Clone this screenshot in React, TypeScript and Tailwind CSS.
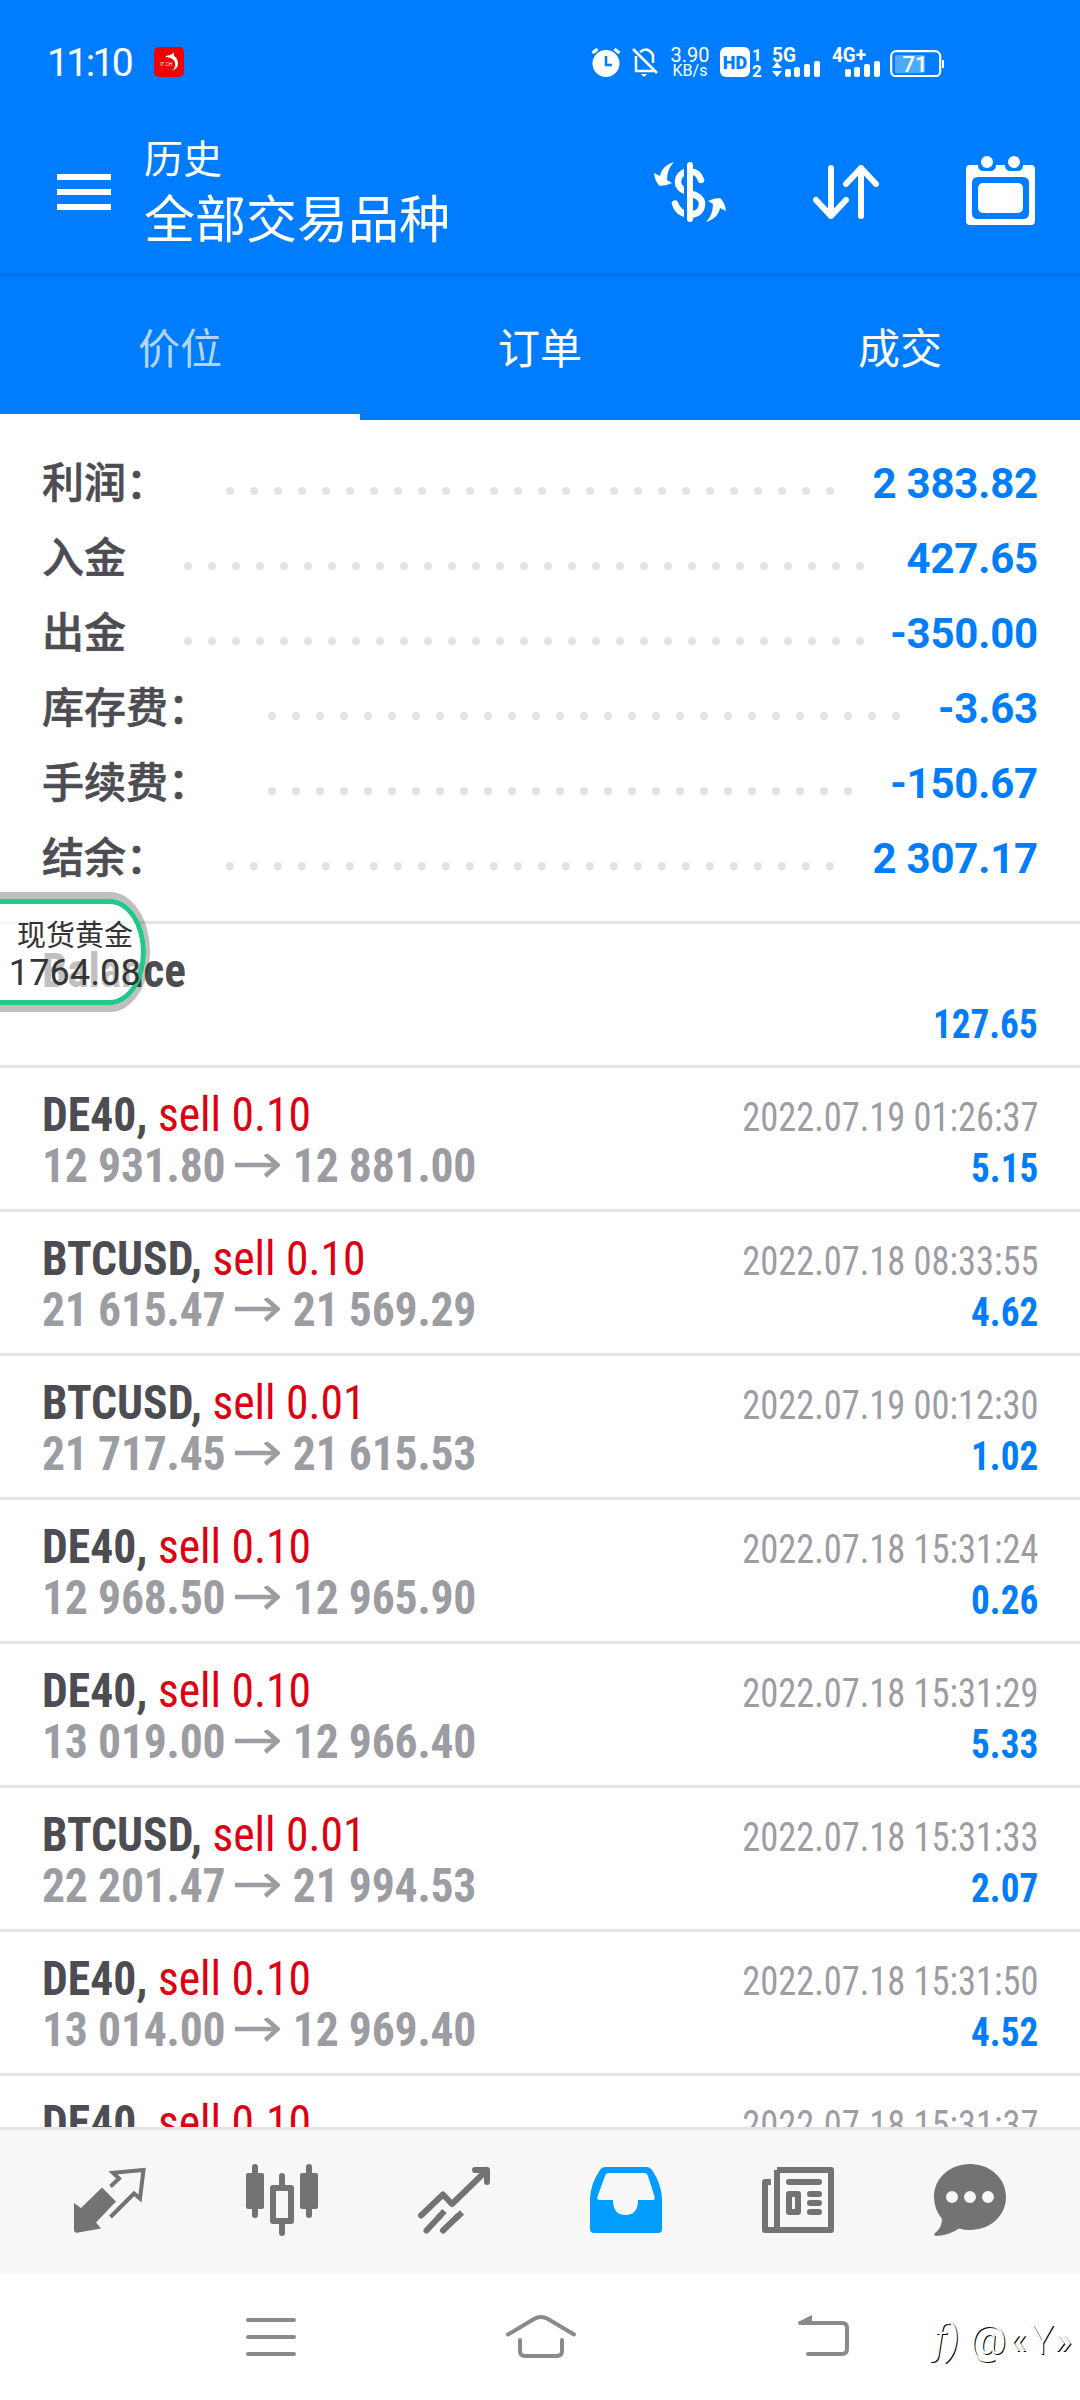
import { clsx } from "clsx";

type SummaryRow = { label: string; value: string; dots: number };

type Deal = {
  symbol: string;
  volume: string;
  open: string;
  close: string;
  time: string;
  profit: string;
};

const summary: SummaryRow[] = [
  { label: "利润：", value: "2 383.82", dots: 26 },
  { label: "入金", value: "427.65", dots: 29 },
  { label: "出金", value: "-350.00", dots: 29 },
  { label: "库存费：", value: "-3.63", dots: 27 },
  { label: "手续费：", value: "-150.67", dots: 25 },
  { label: "结余：", value: "2 307.17", dots: 26 },
];

const deals: Deal[] = [
  { symbol: "DE40", volume: "0.10", open: "12 931.80", close: "12 881.00", time: "2022.07.19 01:26:37", profit: "5.15" },
  { symbol: "BTCUSD", volume: "0.10", open: "21 615.47", close: "21 569.29", time: "2022.07.18 08:33:55", profit: "4.62" },
  { symbol: "BTCUSD", volume: "0.01", open: "21 717.45", close: "21 615.53", time: "2022.07.19 00:12:30", profit: "1.02" },
  { symbol: "DE40", volume: "0.10", open: "12 968.50", close: "12 965.90", time: "2022.07.18 15:31:24", profit: "0.26" },
  { symbol: "DE40", volume: "0.10", open: "13 019.00", close: "12 966.40", time: "2022.07.18 15:31:29", profit: "5.33" },
  { symbol: "BTCUSD", volume: "0.01", open: "22 201.47", close: "21 994.53", time: "2022.07.18 15:31:33", profit: "2.07" },
  { symbol: "DE40", volume: "0.10", open: "13 014.00", close: "12 969.40", time: "2022.07.18 15:31:50", profit: "4.52" },
];

const tabs = ["价位", "订单", "成交"];

function StatusBar() {
  return (
    <div className="flex h-[120px] items-start pt-[47px] pl-[47px] text-white">
      <span className="w-[107px] text-[39px] leading-[32px] tracking-[-2.6px]">11:10</span>
      <svg className="h-[30px] w-[30px]" viewBox="0 0 30 30">
        <rect width="30" height="30" rx="5" fill="#f00000" />
        <path d="M11 10q2-2 5-2 3-1 4-3v4q4 2 4 8 0 5-7 7 5-3 4-8-1-4-5-5-2-1-5-1z" fill="#fff" />
        <text x="6" y="19" fill="#fff" fontSize="5">IT CH</text>
      </svg>

      <div className="ml-[407px] flex items-start">
        <svg className="h-[30px] w-[30px]" viewBox="0 0 30 30" fill="none">
          <circle cx="15" cy="16.5" r="13.5" fill="#fff" />
          <path d="M1.5 6l5-4M28.5 6l-5-4" stroke="#fff" strokeWidth="3" />
          <path d="M15 9v9h6" stroke="#007dff" strokeWidth="2.5" />
        </svg>
        <svg className="ml-[10px] h-[30px] w-[28px]" viewBox="0 0 28 30" fill="none" stroke="#fff" strokeWidth="2.5">
          <path d="M2 2l24 24M5 9v15h18M9 5q8-6 13 3v8" />
          <path d="M10 27h6l-3 3z" fill="#fff" stroke="none" />
        </svg>
        <div className="ml-[9px] flex w-[44px] flex-col items-center text-[20px] leading-[16px]">
          <span>3.90</span>
          <span className="text-[16px] leading-[16px]">KB/s</span>
        </div>
        <div className="ml-2 flex h-[30px] w-[30px] items-center justify-center rounded-[6px] bg-white text-[18px] font-black text-[#007dff]">
          HD
        </div>
        <div className="ml-0.5 flex w-[10px] flex-col text-[17px] leading-[16px] font-bold">
          <span>1</span>
          <span>2</span>
        </div>
        <Signal label="5G" width={24} data />
        <Signal label="4G+" width={34} />
        <svg className="ml-[8px] h-[30px] w-[56px]" viewBox="0 0 56 30">
          <rect x="1.2" y="4.2" width="49" height="25" rx="5" fill="none" stroke="#fff" strokeWidth="2.2" />
          <rect x="5" y="8" width="30" height="18" rx="2" fill="#4dabff" />
          <path d="M53 13v8" stroke="#fff" strokeWidth="2" />
          <text x="25" y="24.5" fill="#fff" fontSize="22" fontWeight="500" textAnchor="middle">71</text>
        </svg>
      </div>
    </div>
  );
}

function Signal({ label, width, data }: { label: string; width: number; data?: boolean }) {
  return (
    <svg className="ml-[10px] h-[30px] w-[50px] overflow-visible" viewBox="0 0 50 30" fill="#fff">
      <text x="0" y="14.5" fontSize="20" fontWeight="700" textLength={width} lengthAdjust="spacingAndGlyphs">
        {label}
      </text>
      {data && <path d="M0 21l5-6 5 6zM0 24h10l-5 6z" />}
      <rect x="13" y="22" width="6" height="8" rx="2" />
      <rect x="22" y="20" width="6" height="10" rx="2" />
      <rect x="32" y="17" width="6" height="13" rx="2" />
      <rect x="42" y="14" width="6" height="16" rx="2" />
    </svg>
  );
}

function Header() {
  return (
    <div className="flex h-[156px] items-start border-b-[3px] border-[#0074ef] pl-[57px] text-white">
      <div className="mt-[54px] flex w-[54px] flex-col gap-[9px]">
        <div className="h-1.5 bg-white" />
        <div className="h-1.5 bg-white" />
        <div className="h-1.5 bg-white" />
      </div>
      <div className="mt-[18px] ml-[33px] flex w-[510px] flex-col">
        <span className="text-[39px] leading-[44px]">历史</span>
        <span className="mt-[9px] text-[51px] leading-[60px]">全部交易品种</span>
      </div>
      {/* currency */}
      <svg className="mt-[42px] h-[60px] w-[72px]" viewBox="0 0 72 60" fill="#fff">
        <path d="M47 18C45 12 42 9.5 36 9.5 27 9.5 24 15 24 20c0 13 24 9 24 22 0 7-5 10.5-12 10.5-9 0-13-5-15-11" fill="none" stroke="#fff" strokeWidth="6.5" strokeLinecap="round" />
        <path d="M31.5 0v60" stroke="#007dff" strokeWidth="3" />
        <path d="M36 3v54" stroke="#fff" strokeWidth="6" strokeLinecap="round" />
        <path d="M20 0C12 2 7 8 6 14L0 11Q1 20 6 24 12 24 18 21l-5-3Q13 7 20 0zM52 60c8-2 13-8 14-14l6 3q-1-9-6-13-6 0-12 3l5 3q0 11-7 18z" />
      </svg>
      <svg className="mt-[45px] ml-[87px] h-[54px] w-[66px]" viewBox="0 0 66 54" fill="none" stroke="#fff" strokeWidth="6" strokeLinecap="round" strokeLinejoin="round">
        <path d="M18 3v48M3 35l15 16 15-16M48 51V3M33 19L48 3l15 16" />
      </svg>
      <svg className="mt-[36px] ml-[87px] h-[69px] w-[69px]" viewBox="0 0 69 69" fill="#fff">
        <path fillRule="evenodd" d="M4 9h8q0 6 6 6h6q6 0 6-6h9q0 6 6 6h6q6 0 6-6h8q4 0 4 4v52q0 4-4 4H4q-4 0-4-4V13q0-4 4-4zm8 12q-6 0-6 6v30q0 6 6 6h45q6 0 6-6V27q0-6-6-6z" />
        <rect x="12" y="27" width="45" height="30" rx="5" />
        <circle cx="21" cy="6" r="6" />
        <circle cx="48" cy="6" r="6" />
      </svg>
    </div>
  );
}

function Tabs() {
  return (
    <div className="grid h-[144px] grid-cols-3 text-[42px] text-white">
      {tabs.map((tab, i) => (
        <div
          key={tab}
          className={clsx(
            "flex items-center justify-center border-b-[6px] pt-2",
            i === 0 ? "border-white text-[#b3d4f5]" : "border-transparent"
          )}
        >
          {tab}
        </div>
      ))}
    </div>
  );
}

function Summary() {
  return (
    <div className="border-b-[3px] border-[#e3e3e3] px-[42px] pt-[26px] pb-[25px]">
      {summary.map((row) => (
        <div key={row.label} className="flex h-[75px] items-center">
          <span className="text-[42px] font-medium text-[#4c4c52] [-webkit-text-stroke:0.6px_#4c4c52]">{row.label}</span>
          <div className="mt-[15px] ml-[58px] flex gap-4">
            {Array.from({ length: row.dots }, (_, i) => (
              <div key={i} className="h-2 w-2 rounded-full bg-[#e3e3e3]" />
            ))}
          </div>
          <span className="ml-auto text-[42px] font-bold tracking-[-0.2px] text-[#007dfa]">{row.value}</span>
        </div>
      ))}
    </div>
  );
}

function DealRow({ deal }: { deal: Deal }) {
  return (
    <div className="flex h-36 shrink-0 justify-between border-b-[3px] border-[#e3e3e3] px-[42px] pt-[21px] font-stretch-condensed">
      <div className="flex origin-left scale-x-95 flex-col text-[48px] leading-[51px]">
        <div>
          <span className="font-bold text-[#4c4c52]">{deal.symbol}, </span>
          <span className="text-[#dd0011]">sell {deal.volume}</span>
        </div>
        <div className="flex items-center font-bold tracking-[-0.2px] text-[#9c9ca3]">
          {deal.open}
          <svg className="mr-[13px] ml-2.5 h-6 w-[48px]" viewBox="0 0 48 24" fill="none" stroke="currentColor" strokeWidth="4.5">
            <path d="M0 11h46M32 0l13 11-13 11" />
          </svg>
          {deal.close}
        </div>
      </div>
      <div className="flex flex-col items-end pt-[3px] text-[40px] leading-[51px]">
        <span className="origin-right scale-x-91 text-[#9c9ca3]">{deal.time}</span>
        <span className="origin-right scale-x-93 font-bold text-[#007dfa]">{deal.profit}</span>
      </div>
    </div>
  );
}

function History() {
  return (
    <div className="flex h-[1203px] flex-col overflow-hidden">
      <div className="flex h-36 shrink-0 justify-between border-b-[3px] border-[#e3e3e3] px-[42px] pt-[21px] font-bold font-stretch-condensed">
        <span className="origin-left scale-x-94 text-[48px] leading-[51px] text-[#4c4c52]">Balance</span>
        <span className="origin-right scale-x-93 pt-[54px] text-[40px] leading-[51px] text-[#007dfa]">127.65</span>
      </div>
      {deals.map((deal) => (
        <DealRow key={deal.time} deal={deal} />
      ))}
      {/* only the top of the next deal is visible above the nav */}
      <div className="flex h-[51px] shrink-0 justify-between overflow-hidden px-[42px] pt-[21px] font-stretch-condensed">
        <div className="origin-left scale-x-95 text-[48px] leading-[51px]">
          <span className="font-bold text-[#4c4c52]">DE40, </span>
          <span className="text-[#dd0011]">sell 0.10</span>
        </div>
        <span className="origin-right scale-x-91 pt-[3px] text-[40px] leading-[51px] text-[#9c9ca3]">
          2022.07.18 15:31:37
        </span>
      </div>
    </div>
  );
}

function BottomNav() {
  return (
    <div className="flex h-[147px] items-start border-t-[3px] border-[#e3e3e3] bg-[#f7f7f7] px-6 pt-[34px] text-[#737373] [&>svg]:mx-[50px] [&>svg]:size-[72px]">
      <svg viewBox="0 0 72 72">
        <path d="M0 39l7 5 21-20.5L42 37.5 22 58.5l5 6L3 68.7q-3 0-3-3z" fill="currentColor" />
        <path d="M36.5 22.5l8.5-8-6-5.7L69.500 6 66 34.500l-6-5L36.500 53" fill="none" stroke="currentColor" strokeWidth="4" />
      </svg>
      <svg viewBox="0 0 72 72" fill="currentColor">
        <rect y="9" width="18" height="36" rx="2" />
        <rect x="6" width="6" height="54" rx="3" />
        <rect x="54" y="9" width="18" height="36" rx="2" />
        <rect x="60" width="6" height="54" rx="3" />
        <rect x="27" y="24" width="18" height="33" fill="none" stroke="currentColor" strokeWidth="6" strokeLinejoin="round" />
        <path d="M36 12v11M36 58v11" stroke="currentColor" strokeWidth="6" strokeLinecap="round" />
      </svg>
      <svg viewBox="0 0 72 72" fill="none" stroke="currentColor" strokeWidth="6" strokeLinecap="round">
        <path d="M3 51.5L25 30.5l9 9.5L69 6M57 6h12v12" strokeLinejoin="round" />
        <path d="M8.5 66.5L22 52M25 66.5L39 53" />
        <path d="M20 54l6.5-7M37 55l7-6.5" strokeLinecap="butt" />
      </svg>
      <svg viewBox="0 0 72 72" fill="#009dff">
        <path fillRule="evenodd" d="M15 3h42q3 0 5 3 9 13 10 28v31q0 4-4 4H4q-4 0-4-4V34Q1 19 10 6q2-3 5-3zm4 6q-3 0-4 3L7.5 32.5q-1 3.5 2 3.5H23q0 15 12.5 15T48 36h14.5q3 0 2-3.5L58 12q-1-3-4-3z" />
      </svg>
      <svg viewBox="0 0 72 72" fill="none" stroke="currentColor" strokeWidth="6" strokeLinejoin="round">
        <path d="M15 6h54v60H3V18h6M15 6v60" />
        <path d="M27 18h30M48 30h9M48 39h9M48 48h9" strokeLinecap="round" />
        <rect x="27" y="30" width="9" height="18" />
      </svg>
      <svg viewBox="0 0 72 72" fill="currentColor">
        <path fillRule="evenodd" d="M36 0c20 0 36 14 36 33S56 66 36 66q-6 0-11-1.5Q16 71 2 72q-3-1-1-3 7-5 7-14Q0 45 0 33C0 14 16 0 36 0zM18 27a6 6 0 100 12 6 6 0 000-12zm18 0a6 6 0 100 12 6 6 0 000-12zm18 0a6 6 0 100 12 6 6 0 000-12z" />
      </svg>
    </div>
  );
}

function SystemNav() {
  return (
    <div className="flex h-[126px] items-start bg-white pt-[38px] text-[#8a8a8a]">
      <svg className="ml-[246px] h-[46px] w-[50px]" viewBox="0 0 50 46" fill="none" stroke="currentColor" strokeWidth="4" strokeLinecap="round">
        <path d="M2 8h46M2 25h46M2 42h46" />
      </svg>
      <svg className="ml-[210px] h-[46px] w-[70px]" viewBox="0 0 70 46" fill="none" stroke="currentColor" strokeWidth="4" strokeLinecap="round">
        <path d="M2 22.5L28 7q7-4 14 0l26 15.5M14 28v11q0 5 5 5h32q5 0 5-5V28" />
      </svg>
      <svg className="ml-[221px] h-[46px] w-[53px]" viewBox="0 0 53 46" fill="none" stroke="currentColor" strokeWidth="4" strokeLinecap="round">
        <path d="M3 11h42q5 0 5 5v21q0 5-5 5H11" />
        <path d="M1 10l14-7v8z" fill="currentColor" stroke="none" />
      </svg>
    </div>
  );
}

export default function App() {
  return (
    <div className="relative h-[2400px] w-[1080px] overflow-hidden bg-white font-['Roboto','Noto_Sans_CJK_SC',sans-serif]">
      <div className="bg-[#007dff]">
        <StatusBar />
        <Header />
        <Tabs />
      </div>
      <Summary />
      <History />
      <BottomNav />
      <SystemNav />

      {/* floating gold price widget */}
      <div className="absolute top-[892px] left-[-40px] h-[120px] w-[190px] rounded-[40px/60px] border-y-[7px] border-r-[4px] border-black/25">
        <div className="flex h-full flex-col items-end rounded-[36px/53px] border-[5px] border-[#22c887] bg-white/65 text-[#333]">
          <span className="mt-[14px] mr-2 text-[29px] leading-[36px]">现货黄金</span>
          <span className="text-[36px] leading-[38px] tracking-[0.2px]">1764.08</span>
        </div>
      </div>

      <div className="absolute top-[2314px] left-[934px] flex text-[40px] leading-[54px] font-light text-white [text-shadow:1px_1px_0_#000]">
        <span className="w-[36px] italic">ƒ)</span>
        <span className="w-[39px]">@</span>
        <span className="w-[21px]">«</span>
        <span className="w-[24px]">Y</span>
        <span>»</span>
      </div>
    </div>
  );
}
